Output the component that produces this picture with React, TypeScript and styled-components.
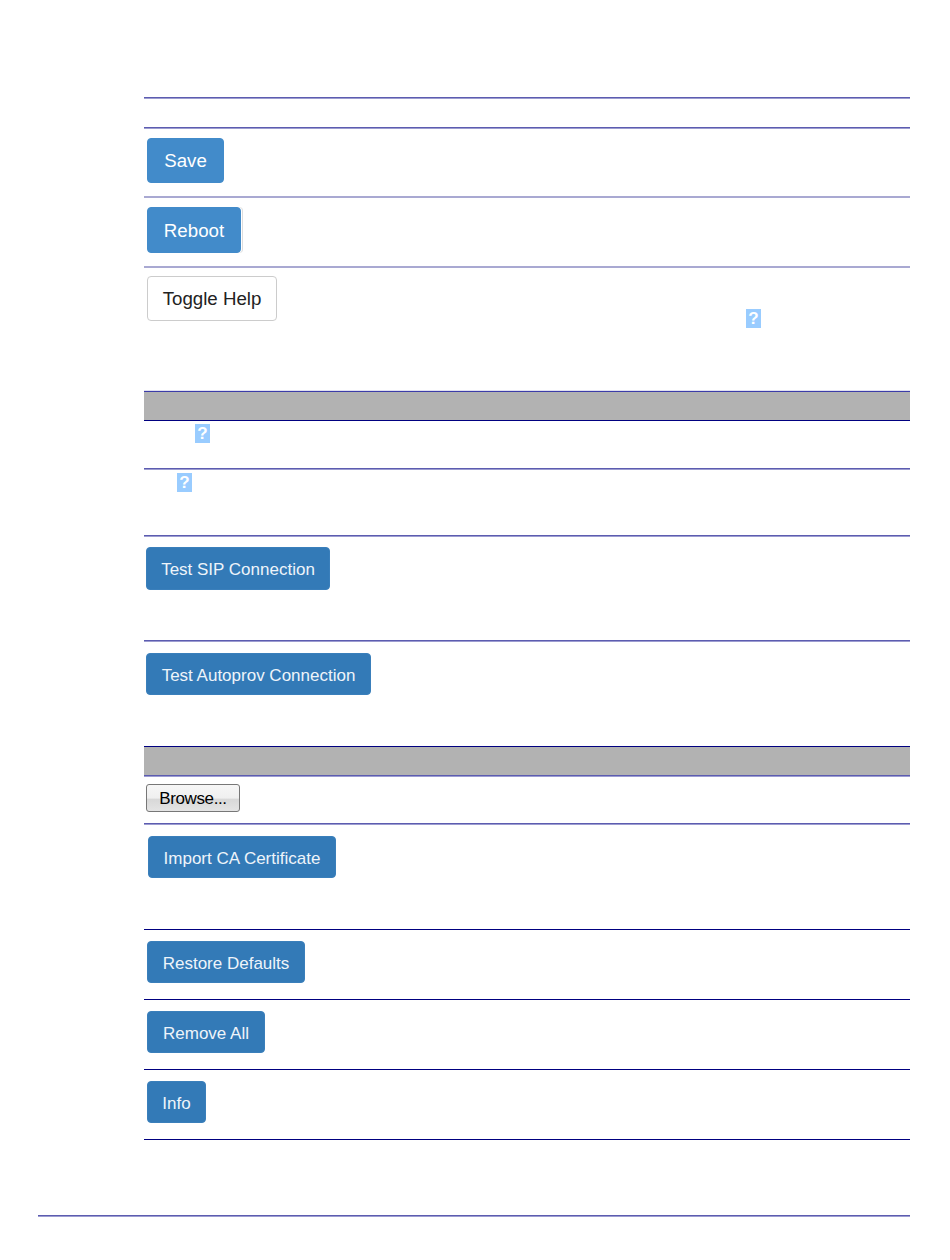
import React from 'react';
import styled, { createGlobalStyle } from 'styled-components';

const GlobalStyle = createGlobalStyle`
  html, body {
    margin: 0;
    background: #ffffff;
  }
`;

const colors = {
  navy: '#000080',
  mid: '#5c5cb0',
  midUnder: '#9c9cd0',
  soft: '#a9a9d2',
  pale: '#e0e0f0',
  heading: '#b2b2b2',
  primary: '#428bca',
  primaryBorder: '#428bca',
  action: '#337ab7',
  actionBorder: '#3a7fbb',
  help: '#99ccff',
};

// a ruling in the scan is two pixel rows: $line on top, $under just below it
const tones = {
  mid: { line: colors.mid, under: colors.midUnder },
  soft: { line: colors.soft, under: colors.soft },
  dark: { line: colors.pale, under: '#3c3ca8' },
  navy: { line: '#ffffff', under: colors.navy },
  onGrey: { line: colors.heading, under: colors.navy },
};

type Tone = keyof typeof tones;

const Page = styled.div`
  box-sizing: border-box;
  width: 950px;
  height: 1260px;
  padding-top: 97px;
  display: flex;
  flex-direction: column;
  font-family: 'Liberation Sans', Arial, sans-serif;
`;

const Table = styled.div`
  margin-left: 144px;
  width: 766px;
  display: flex;
  flex-direction: column;
`;

const Row = styled.div<{ $height: number; $tone: Tone; $top: number; $left: number; $heading?: boolean }>`
  box-sizing: border-box;
  height: ${(p) => p.$height}px;
  border-top: 1px solid ${(p) => tones[p.$tone].line};
  box-shadow: inset 0 1px 0 ${(p) => tones[p.$tone].under};
  padding: ${(p) => p.$top}px 0 0 ${(p) => p.$left}px;
  background: ${(p) => (p.$heading ? colors.heading : 'transparent')};
  display: flex;
  align-items: flex-start;
`;

const ClosingLine = styled.div`
  height: 2px;
  box-shadow: inset 0 -1px 0 ${colors.navy};
`;

const Button = styled.button<{ $width: number; $height: number; $variant: 'primary' | 'action' | 'plain' }>`
  box-sizing: border-box;
  width: ${(p) => p.$width}px;
  height: ${(p) => p.$height}px;
  flex-shrink: 0;
  padding: 2px 0 0;
  border-radius: 4px;
  font-family: inherit;
  font-size: ${(p) => (p.$variant === 'action' ? 17 : 18.7)}px;
  line-height: 1;
  text-align: center;
  border: 1px solid
    ${(p) =>
      p.$variant === 'primary' ? colors.primaryBorder : p.$variant === 'action' ? colors.actionBorder : '#cccccc'};
  background: ${(p) =>
    p.$variant === 'primary' ? colors.primary : p.$variant === 'action' ? colors.action : '#ffffff'};
  color: ${(p) => (p.$variant === 'plain' ? '#222222' : p.$variant === 'action' ? '#eef4fa' : '#ffffff')};
`;

const RebootButton = styled(Button)`
  box-shadow: 1px 0 0 #ffffff, 2px 0 0 #dddddd;
`;

const BrowseButton = styled.button`
  box-sizing: border-box;
  width: 94px;
  height: 28px;
  padding: 2px 0 0;
  border: 1px solid #777777;
  border-radius: 3px;
  background: linear-gradient(#f6f6f6, #f0f0f0 50%, #d8d8d8 55%, #e4e4e4);
  font-family: inherit;
  font-size: 17px;
  letter-spacing: -0.4px;
  color: #000000;
`;

const Help = styled.span<{ $left?: number; $top?: number }>`
  box-sizing: border-box;
  width: 15px;
  height: 19px;
  margin: ${(p) => p.$top ?? 0}px 0 0 ${(p) => p.$left ?? 0}px;
  background: ${colors.help};
  color: #ffffff;
  font-size: 17px;
  font-weight: 700;
  line-height: 19px;
  text-align: center;
`;

const PageRule = styled.div`
  margin: 75px 0 0 38px;
  width: 872px;
  height: 2px;
  background: ${colors.mid};
  box-shadow: inset 0 -1px 0 ${colors.midUnder};
`;

export default function App() {
  return (
    <>
      <GlobalStyle />
      <Page>
        <Table>
          <Row $height={30} $tone="mid" $top={0} $left={0} />
          <Row $height={69} $tone="mid" $top={10} $left={3}>
            <Button $variant="primary" $width={77} $height={45}>Save</Button>
          </Row>
          <Row $height={70} $tone="soft" $top={10} $left={3}>
            <RebootButton $variant="primary" $width={94} $height={46}>Reboot</RebootButton>
          </Row>
          <Row $height={124} $tone="soft" $top={9} $left={3}>
            <Button $variant="plain" $width={130} $height={45}>Toggle Help</Button>
            <Help $left={469} $top={33}>?</Help>
          </Row>
          <Row $height={29} $tone="dark" $top={0} $left={0} $heading />
          <Row $height={49} $tone="onGrey" $top={4} $left={51}>
            <Help>?</Help>
          </Row>
          <Row $height={67} $tone="mid" $top={4} $left={33}>
            <Help>?</Help>
          </Row>
          <Row $height={105} $tone="mid" $top={11} $left={2}>
            <Button $variant="action" $width={184} $height={43}>Test SIP Connection</Button>
          </Row>
          <Row $height={105} $tone="mid" $top={12} $left={2}>
            <Button $variant="action" $width={225} $height={42}>Test Autoprov Connection</Button>
          </Row>
          <Row $height={30} $tone="navy" $top={0} $left={0} $heading />
          <Row $height={48} $tone="mid" $top={8} $left={2}>
            <BrowseButton>Browse...</BrowseButton>
          </Row>
          <Row $height={105} $tone="mid" $top={12} $left={4}>
            <Button $variant="action" $width={188} $height={42}>Import CA Certificate</Button>
          </Row>
          <Row $height={70} $tone="navy" $top={12} $left={3}>
            <Button $variant="action" $width={158} $height={42}>Restore Defaults</Button>
          </Row>
          <Row $height={70} $tone="navy" $top={12} $left={3}>
            <Button $variant="action" $width={118} $height={42}>Remove All</Button>
          </Row>
          <Row $height={70} $tone="navy" $top={12} $left={3}>
            <Button $variant="action" $width={59} $height={42}>Info</Button>
          </Row>
          <ClosingLine />
        </Table>
        <PageRule />
      </Page>
    </>
  );
}
